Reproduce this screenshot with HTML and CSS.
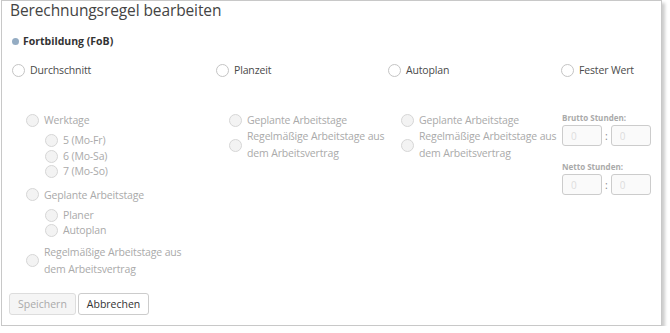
FILE: index.html
```html
<!DOCTYPE html>
<html lang="de">
<head>
    <meta charset="UTF-8">
    <title>Berechnungsregel bearbeiten</title>
    <link rel="stylesheet" href="styles.css">
</head>
<body>
    <div class="dialog">
        <h1 class="title">Berechnungsregel bearbeiten</h1>

        <div class="category">
            <span class="dot"></span>
            <span>Fortbildung (FoB)</span>
        </div>

        <div class="modes">
            <label class="option"><span class="radio"></span>Durchschnitt</label>
            <label class="option"><span class="radio"></span>Planzeit</label>
            <label class="option"><span class="radio"></span>Autoplan</label>
            <label class="option"><span class="radio"></span>Fester Wert</label>
        </div>

        <div class="details">
            <div class="col col-avg">
                <div class="group">
                    <label class="option off"><span class="radio"></span>Werktage</label>
                    <div class="sub">
                        <label class="option off"><span class="radio"></span>5 (Mo-Fr)</label>
                        <label class="option off"><span class="radio"></span>6 (Mo-Sa)</label>
                        <label class="option off"><span class="radio"></span>7 (Mo-So)</label>
                    </div>
                </div>
                <div class="group">
                    <label class="option off"><span class="radio"></span>Geplante Arbeitstage</label>
                    <div class="sub">
                        <label class="option off"><span class="radio"></span>Planer</label>
                        <label class="option off"><span class="radio"></span>Autoplan</label>
                    </div>
                </div>
                <div class="group">
                    <label class="option off"><span class="radio"></span><span>Regelmäßige Arbeitstage aus<br>dem Arbeitsvertrag</span></label>
                </div>
            </div>

            <div class="col col-plan">
                <label class="option off"><span class="radio"></span>Geplante Arbeitstage</label>
                <label class="option off"><span class="radio"></span><span>Regelmäßige Arbeitstage aus<br>dem Arbeitsvertrag</span></label>
            </div>

            <div class="col col-plan">
                <label class="option off"><span class="radio"></span>Geplante Arbeitstage</label>
                <label class="option off"><span class="radio"></span><span>Regelmäßige Arbeitstage aus<br>dem Arbeitsvertrag</span></label>
            </div>

            <div class="col col-fixed">
                <div class="field">
                    <div class="field-label">Brutto Stunden:</div>
                    <div class="time">
                        <input type="text" placeholder="0" disabled>
                        <span class="sep">:</span>
                        <input type="text" placeholder="0" disabled>
                    </div>
                </div>
                <div class="field">
                    <div class="field-label">Netto Stunden:</div>
                    <div class="time">
                        <input type="text" placeholder="0" disabled>
                        <span class="sep">:</span>
                        <input type="text" placeholder="0" disabled>
                    </div>
                </div>
            </div>
        </div>

        <div class="actions">
            <button class="btn" disabled>Speichern</button>
            <button class="btn">Abbrechen</button>
        </div>
    </div>
</body>
</html>
```

FILE: styles.css
```css
* {
    margin: 0;
    padding: 0;
    box-sizing: border-box;
    font-family: "Open Sans", "Noto Sans", sans-serif;
}

body {
    background: white;
    color: #555;
    font-size: 10.5px;
}

.dialog {
    width: 661px;
    height: 326px;
    margin-left: 1px;
    border: 1px solid #c8c8c8;
    background: white;
    box-shadow: 3px 3px 3px rgba(0, 0, 0, 0.2);
    display: flex;
    flex-direction: column;
}

.title {
    font-size: 15.5px;
    font-weight: normal;
    color: #444;
    line-height: 18px;
    padding-left: 8px;
    letter-spacing: -0.1px;
}

.category {
    display: flex;
    align-items: center;
    gap: 4px;
    margin-top: 14px;
    padding-left: 10px;
    font-weight: bold;
    color: #333;
    line-height: 16px;
}

.dot {
    width: 7px;
    height: 7px;
    border-radius: 50%;
    background: #94acc3;
}

.modes {
    display: grid;
    grid-template-columns: 204px 172px 173px auto;
    margin-top: 13px;
    padding-left: 10px;
}

.option {
    display: flex;
    align-items: center;
    gap: 5px;
    line-height: 16px;
    color: #4a4a4a;
    white-space: nowrap;
    letter-spacing: -0.15px;
}

.radio {
    flex: none;
    width: 13px;
    height: 13px;
    border: 1px solid #c4c4c4;
    border-radius: 50%;
    background: white;
}

.option.off {
    color: #aaa;
}

.option.off .radio {
    border-color: #d6d6d6;
    background: #f3f3f3;
}

.details {
    display: grid;
    grid-template-columns: 204px 172px 173px auto;
    margin-top: 34px;
    padding-left: 10px;
}

.col-avg {
    padding-left: 14px;
    display: flex;
    flex-direction: column;
    gap: 7px;
}

.sub {
    padding-left: 19px;
    margin-top: 5px;
}

.sub .option {
    line-height: 15.5px;
}

.col-avg .group:last-child {
    margin-top: -2px;
}

.col-avg .group:last-child .option,
.col-plan .option:last-child {
    line-height: 17px;
}

.col-plan {
    padding-left: 13px;
}

.col-fixed {
    padding-left: 1px;
    display: flex;
    flex-direction: column;
    gap: 15px;
}

.field-label {
    font-size: 8px;
    font-weight: bold;
    color: #aaa;
    line-height: 12px;
    margin-bottom: 1px;
}

.time {
    display: flex;
    align-items: center;
    gap: 3px;
}

.time input {
    width: 40px;
    height: 21px;
    border: 1px solid #ccc;
    border-radius: 3px;
    background: #fafafa;
    padding-left: 8px;
    font-size: 10px;
}

.time input::placeholder {
    color: #ddd;
}

.sep {
    color: #888;
}

.actions {
    margin-top: auto;
    margin-bottom: 10px;
    padding-left: 7px;
    display: flex;
    gap: 2px;
}

.btn {
    height: 22px;
    padding: 0 8px;
    border: 1px solid #ccc;
    border-radius: 3px;
    background: white;
    color: #333;
    font-size: 10.5px;
}

.btn:disabled {
    background: #f5f5f5;
    border-color: #ddd;
    color: #aaa;
}
```
